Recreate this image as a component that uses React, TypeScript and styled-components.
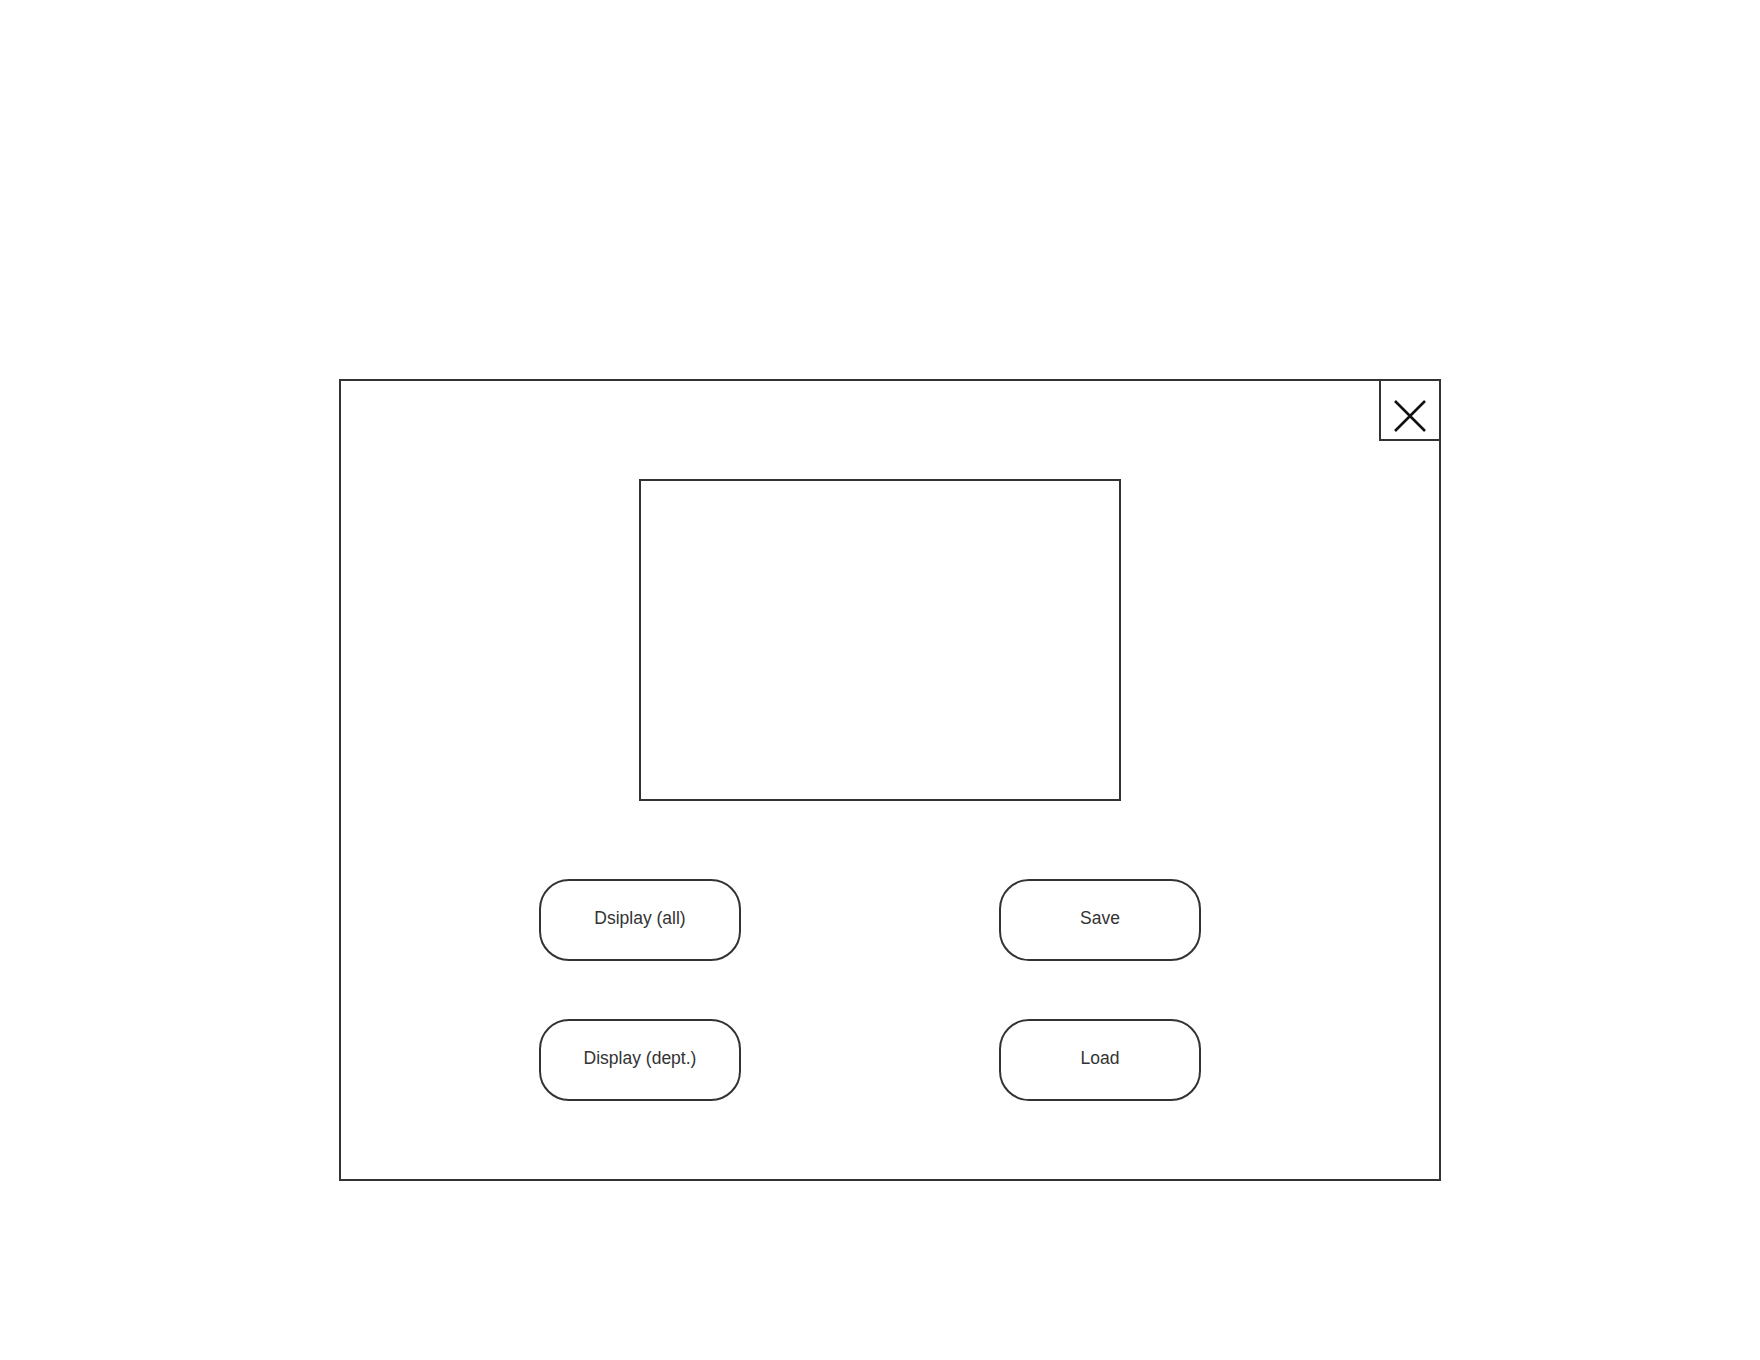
import styled, { createGlobalStyle } from 'styled-components';

const GlobalStyle = createGlobalStyle`
  html, body {
    margin: 0;
    padding: 0;
    background: #ffffff;
  }
  body {
    font-family: 'Liberation Sans', Arial, sans-serif;
    color: #333333;
  }
  * {
    box-sizing: border-box;
  }
`;

function App() {
  return (
    <Page>
      <GlobalStyle />
      <Window>
        <CloseButton aria-label="close">
          <svg width="62" height="62" viewBox="0 0 62 62">
            <path d="M16 22 L46 52 M46 22 L16 52" stroke="#111" strokeWidth="2.6" fill="none" />
          </svg>
        </CloseButton>
        <Screen />
        <ButtonGrid>
          <PillButton>Dsiplay (all)</PillButton>
          <PillButton>Save</PillButton>
          <PillButton>Display (dept.)</PillButton>
          <PillButton>Load</PillButton>
        </ButtonGrid>
      </Window>
    </Page>
  );
}

export default App;

const Page = styled.div`
  width: 100vw;
  min-height: 100vh;
  padding: 379px 0 0 339px;
`;

const Window = styled.div`
  position: relative;
  width: 1102px;
  height: 802px;
  border: 2px solid #333333;
  padding: 98px 0 0 298px;
  display: flex;
  flex-direction: column;
`;

const CloseButton = styled.div`
  position: absolute;
  top: -2px;
  right: -2px;
  width: 62px;
  height: 62px;
  border: 2px solid #333333;
  background: #ffffff;

  svg {
    position: absolute;
    top: -2px;
    left: -2px;
  }
`;

const Screen = styled.div`
  width: 482px;
  height: 322px;
  border: 2px solid #333333;
`;

const ButtonGrid = styled.div`
  display: grid;
  grid-template-columns: 202px 202px;
  column-gap: 258px;
  row-gap: 58px;
  margin: 78px 0 0 -100px;
`;

const PillButton = styled.div`
  width: 202px;
  height: 82px;
  border: 2px solid #333333;
  border-radius: 30px;
  display: flex;
  align-items: center;
  justify-content: center;
  padding-bottom: 4px;
  font-size: 17.5px;
  color: #333333;
`;
